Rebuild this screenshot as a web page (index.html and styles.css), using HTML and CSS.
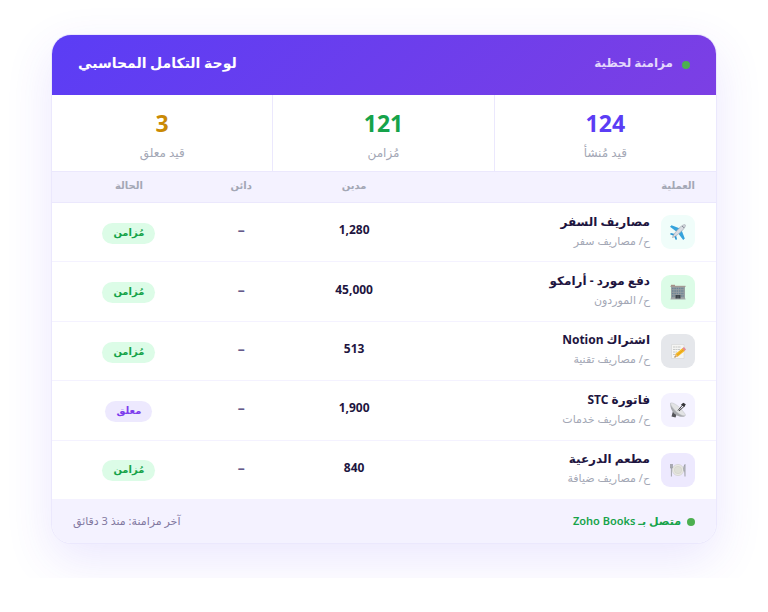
FILE: index.html
```html
<!DOCTYPE html>
<html lang="ar" dir="rtl">

<head>
    <meta charset="UTF-8" />
    <meta name="viewport" content="width=device-width, initial-scale=1.0" />
    <title>لوحة التكامل المحاسبي</title>
    <link rel="stylesheet" href="styles.css">
</head>

<body>
    <main class="card">
        <header class="card-header">
            <p class="live"><span class="dot"></span>مزامنة لحظية</p>
            <h1>لوحة التكامل المحاسبي</h1>
        </header>

        <section class="stats">
            <div class="stat created"><strong>124</strong><span>قيد مُنشأ</span></div>
            <div class="stat synced"><strong>121</strong><span>مُزامن</span></div>
            <div class="stat pending"><strong>3</strong><span>قيد معلق</span></div>
        </section>

        <table class="entries">
            <thead>
                <tr>
                    <th class="operation">العملية</th>
                    <th class="debit">مدين</th>
                    <th class="credit">دائن</th>
                    <th class="status">الحالة</th>
                </tr>
            </thead>
            <tbody>
                <tr>
                    <td class="operation">
                        <div class="entry">
                            <span class="icon travel">
                                <svg viewBox="0 0 16 16" aria-hidden="true">
                                    <path d="M10 4.500 1.500 1.200 0 2.800 6.300 7.500zM11.500 6l3.300 8.500-1.600 1.500-4.700-6.300z" fill="#36a3dc" />
                                    <path d="M5 10 .8 9 0 10.200l3.500 1.600zM6 11l1 4.200-1.200.8-1.600-3.500z" fill="#2795d2" />
                                    <path d="M2.500 13.500C3 10.500 10.500 1.800 13.500.9c2-.6 2.200 0 1.600 1.600C14.200 5.500 5.500 13 2.500 13.500z" fill="#d9dde3" stroke="#a0a5b0" stroke-width=".7" />
                                    <path d="M12.400 2.200l1.500 1.500" stroke="#5c6573" stroke-width="1" />
                                </svg>
                            </span>
                            <div>
                                <h2>مصاريف السفر</h2>
                                <p>ح/ مصاريف سفر</p>
                            </div>
                        </div>
                    </td>
                    <td class="debit">1,280</td>
                    <td class="credit">–</td>
                    <td class="status"><span class="badge done">مُزامن</span></td>
                </tr>
                <tr>
                    <td class="operation">
                        <div class="entry">
                            <span class="icon supplier">
                                <svg viewBox="0 0 16 16" aria-hidden="true">
                                    <path d="M1 2h14v13H1z" fill="#9aa0a2" />
                                    <path d="M1 .8h4V2H1z" fill="#a58f84" />
                                    <path d="M.5 1.800h15V3H.5z" fill="#a39a94" />
                                    <path d="M2 4.500h12M2 7h12M2 9.500h12M2 12h3M11 12h3" stroke="#6c8496" stroke-width="1.300" stroke-dasharray="1.600 .7" />
                                    <path d="M5.500 11h5v4h-5z" fill="#3c444b" />
                                    <path d="M8 11.500V15" stroke="#7e868c" stroke-width=".5" />
                                    <path d="M.5 15h15" stroke="#a7acae" />
                                </svg>
                            </span>
                            <div>
                                <h2>دفع مورد - أرامكو</h2>
                                <p>ح/ الموردون</p>
                            </div>
                        </div>
                    </td>
                    <td class="debit">45,000</td>
                    <td class="credit">–</td>
                    <td class="status"><span class="badge done">مُزامن</span></td>
                </tr>
                <tr>
                    <td class="operation">
                        <div class="entry">
                            <span class="icon software">
                                <svg viewBox="0 0 16 16" aria-hidden="true">
                                    <path d="M1.500 1.500H14V15.500H1.500z" fill="#f5f5f3" stroke="#cfd0d0" stroke-width=".5" />
                                    <path d="M3 4h8M3 6.500h7M3 9h4M3 11.500h3" stroke="#a8abad" stroke-width=".6" stroke-dasharray="2 .5" />
                                    <path d="M4.500 14.500l1.200-3.700 7-5.800 2.200 2.700-7 5.800z" fill="#f5b921" />
                                    <path d="M6.800 12.400l7-5.900" stroke="#d58b18" stroke-width=".6" />
                                    <path d="M12.300 5.300l1.700-1.400 2 2.700-1.500 1.400z" fill="#e58b94" />
                                    <path d="M4.500 14.500l1.200-3.700 2.200 2.700z" fill="#e4bb88" />
                                    <path d="M4.500 14.500l.4-1.300.9.900z" fill="#444" />
                                </svg>
                            </span>
                            <div>
                                <h2>اشتراك Notion</h2>
                                <p>ح/ مصاريف تقنية</p>
                            </div>
                        </div>
                    </td>
                    <td class="debit">513</td>
                    <td class="credit">–</td>
                    <td class="status"><span class="badge done">مُزامن</span></td>
                </tr>
                <tr>
                    <td class="operation">
                        <div class="entry">
                            <span class="icon telecom">
                                <svg viewBox="0 0 16 16" aria-hidden="true">
                                    <path d="M3 9l-1.500 5.500L5.500 15.500l1.500-4z" fill="#55555a" />
                                    <path d="M.5 1C-.5 6 3 12.500 9.500 14.500c3 .8 5.500.2 5.800-1z" fill="#a9abaf" />
                                    <path d="M.5 1C3 .2 8 3.500 11.500 7.500c2.800 3.200 4.500 5.500 3.800 6-1.500 1-6.500-1-10-4.800C2 5.200 0 2 .5 1z" fill="#e2e3e4" stroke="#bbbdc0" stroke-width=".5" />
                                    <path d="M8 8.500 13 2.500M9 9l5.500-5" stroke="#343438" stroke-width=".9" />
                                    <path d="M11 2.800 13.300.8 15.800 2.300 14.300 5z" fill="#343438" />
                                </svg>
                            </span>
                            <div>
                                <h2>فاتورة STC</h2>
                                <p>ح/ مصاريف خدمات</p>
                            </div>
                        </div>
                    </td>
                    <td class="debit">1,900</td>
                    <td class="credit">–</td>
                    <td class="status"><span class="badge waiting">معلق</span></td>
                </tr>
                <tr>
                    <td class="operation">
                        <div class="entry">
                            <span class="icon dining">
                                <svg viewBox="0 0 16 16" aria-hidden="true">
                                    <circle cx="8" cy="8" r="5.600" fill="#e9e9e2" stroke="#c6c7c1" stroke-width=".5" />
                                    <circle cx="8" cy="8" r="3.700" fill="#dedfd7" stroke="#cccdc6" stroke-width=".5" />
                                    <path d="M.4 2v4h2V2M1.400 2v12.500" fill="none" stroke="#9a9ca3" stroke-width=".9" />
                                    <path d="M15 14.500v-12c-1.500 2-1.500 4.500-.8 7" fill="#c3c5cb" stroke="#9a9ca3" stroke-width=".9" />
                                </svg>
                            </span>
                            <div>
                                <h2>مطعم الدرعية</h2>
                                <p>ح/ مصاريف ضيافة</p>
                            </div>
                        </div>
                    </td>
                    <td class="debit">840</td>
                    <td class="credit">–</td>
                    <td class="status"><span class="badge done">مُزامن</span></td>
                </tr>
            </tbody>
        </table>

        <footer class="card-footer">
            <p class="connected"><span class="dot"></span><span>متصل بـ Zoho Books</span></p>
            <p class="last-sync">آخر مزامنة: منذ 3 دقائق</p>
        </footer>
    </main>
</body>

</html>
```
FILE: styles.css
```css
:root {
    --primary: #5b3df5;
    --violet: #7c3fe4;
    --green: #16a34a;
    --amber: #ca8a04;
    --text: #1e1540;
    --gray: #a3a7b5;
    --soft: #f4f2ff;
    --line: #ebe8fd;
}

* {
    box-sizing: border-box;
}

body {
    font-family: "Noto Sans", "DejaVu Sans", sans-serif;
    background: #fff;
    color: var(--text);
    margin: 0;
    padding: 34px 51px;
}

h1,
h2,
p {
    margin: 0;
}

.card {
    background: #fff;
    border: 1px solid var(--line);
    border-radius: 20px;
    box-shadow: 0 16px 48px rgba(91, 61, 245, 0.12);
    overflow: hidden;
}

.card-header {
    display: flex;
    align-items: center;
    justify-content: space-between;
    height: 60px;
    padding: 0 26px 4px;
    background: linear-gradient(135deg, var(--primary), var(--violet));
    color: #fff;
}

h1 {
    font-size: 14px;
    font-weight: 700;
    line-height: 20px;
}

.dot {
    width: 8px;
    height: 8px;
    margin-top: 3px;
    border-radius: 50%;
    background: #4caf50;
}

.live {
    display: flex;
    align-items: center;
    gap: 9px;
    font-size: 12px;
    font-weight: 600;
    line-height: 20px;
    color: #e3d8fc;
}

.stats {
    display: grid;
    grid-template-columns: repeat(3, 1fr);
}

.stat {
    height: 76px;
    padding-top: 12px;
    text-align: center;
}

.stat + .stat {
    border-right: 1px solid var(--line);
}

.stat strong,
.stat span {
    display: block;
}

.stat strong {
    font-size: 23px;
    font-weight: 700;
    line-height: 32px;
}

.stat span {
    margin-top: 4px;
    font-size: 12px;
    line-height: 20px;
    color: var(--gray);
}

.created strong {
    color: var(--primary);
}

.synced strong {
    color: var(--green);
}

.pending strong {
    color: var(--amber);
}

.entries {
    width: 100%;
    height: 329px;
    table-layout: fixed;
    border-collapse: separate;
    border-spacing: 0;
}

.entries th {
    height: 32px;
    padding: 0 0 4px;
    border-top: 1px solid var(--line);
    border-bottom: 1px solid var(--line);
    background: var(--soft);
    font-size: 10px;
    font-weight: 700;
    color: var(--gray);
}

.entries td {
    padding: 0;
    border-bottom: 1px solid var(--soft);
    text-align: center;
}

.entries .debit,
.entries .credit {
    width: 17%;
}

.entries .status {
    width: 20%;
    padding-left: 21px;
}

.entries .operation {
    padding-right: 21px;
    text-align: right;
}

.entries td.debit,
.entries td.credit {
    padding-bottom: 4px;
    font-size: 12px;
    font-weight: 700;
    line-height: 20px;
}

.entries td.credit {
    font-size: 14px;
    color: #665a8c;
}

.entry {
    display: flex;
    align-items: center;
    gap: 11px;
}

.entry > div {
    padding-bottom: 3px;
}

.icon {
    display: grid;
    place-items: center;
    width: 34px;
    height: 34px;
    border-radius: 9px;
}

.icon svg {
    width: 16px;
    height: 16px;
}

.travel {
    background: #f0fdfa;
}

.supplier {
    background: #dcfce7;
}

.software {
    background: #e5e7eb;
}

.telecom {
    background: #f4f2ff;
}

.dining {
    background: #ede9fe;
}

h2 {
    font-size: 12px;
    font-weight: 700;
    line-height: 20px;
}

.entry p {
    font-size: 11px;
    line-height: 18px;
    color: var(--gray);
}

.badge {
    display: inline-block;
    padding: 0 11px 3px;
    border-radius: 11px;
    font-size: 10px;
    font-weight: 700;
    line-height: 18px;
    vertical-align: middle;
}

.done {
    background: #dcfce7;
    color: var(--green);
}

.waiting {
    background: #ede9fe;
    color: #7c3aed;
}

.card-footer {
    display: flex;
    align-items: center;
    justify-content: space-between;
    height: 43px;
    padding: 0 21px 3px;
    background: var(--soft);
}

.connected {
    display: flex;
    align-items: center;
    gap: 6px;
    font-size: 11px;
    font-weight: 600;
    color: var(--green);
}

.last-sync {
    font-size: 11px;
    color: #82789f;
}
```
